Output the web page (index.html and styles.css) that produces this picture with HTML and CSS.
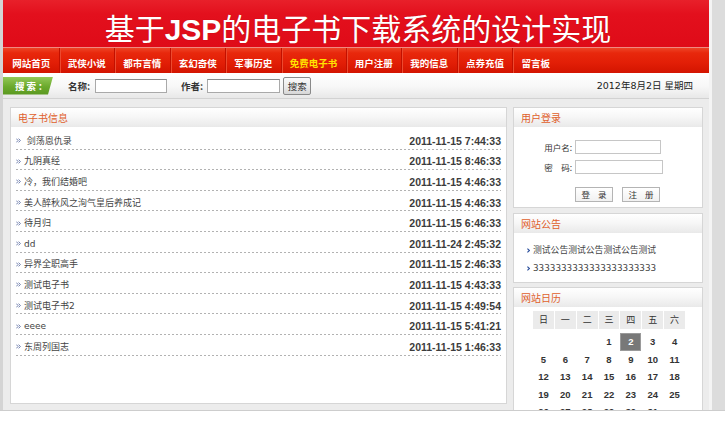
FILE: index.html
```html
<!DOCTYPE html>
<html lang="zh-CN">
<head>
<meta charset="utf-8">
<title>基于JSP的电子书下载系统的设计实现</title>
<link rel="stylesheet" href="styles.css">
</head>
<body>
<div class="screen">
  <div class="edge-left"></div>
  <div class="site">
    <header class="banner"><h1>基于<b>JSP</b>的电子书下载系统的设计实现</h1></header>
    <nav class="nav">
      <a>网站首页</a><a>武侠小说</a><a>都市言情</a><a>玄幻奇侠</a><a>军事历史</a><a class="hot">免费电子书</a><a>用户注册</a><a>我的信息</a><a>点券充值</a><a>留言板</a>
    </nav>
    <div class="searchbar">
      <span class="search-tag">搜索：</span>
      <label class="field-label">名称:</label><input class="field w-name" type="text">
      <label class="field-label second">作者:</label><input class="field w-author" type="text">
      <button class="search-btn">搜索</button>
      <span class="today">2012年8月2日 星期四</span>
    </div>
    <div class="content">
      <section class="panel books">
        <div class="panel-head">电子书信息</div>
        <ul class="book-list">
          <li><span class="title"><svg class="dbl" viewBox="0 0 5 5"><path d="M0.3 0.6 L2.1 2.5 L0.3 4.4 M2.6 0.6 L4.4 2.5 L2.6 4.4"/></svg> 剑荡恩仇录</span><span class="date">2011-11-15 7:44:33</span></li>
          <li><span class="title"><svg class="dbl" viewBox="0 0 5 5"><path d="M0.3 0.6 L2.1 2.5 L0.3 4.4 M2.6 0.6 L4.4 2.5 L2.6 4.4"/></svg>九阴真经</span><span class="date">2011-11-15 8:46:33</span></li>
          <li><span class="title"><svg class="dbl" viewBox="0 0 5 5"><path d="M0.3 0.6 L2.1 2.5 L0.3 4.4 M2.6 0.6 L4.4 2.5 L2.6 4.4"/></svg>冷，我们结婚吧</span><span class="date">2011-11-15 4:46:33</span></li>
          <li><span class="title"><svg class="dbl" viewBox="0 0 5 5"><path d="M0.3 0.6 L2.1 2.5 L0.3 4.4 M2.6 0.6 L4.4 2.5 L2.6 4.4"/></svg>美人醉秋风之洵气皇后养成记</span><span class="date">2011-11-15 4:46:33</span></li>
          <li><span class="title"><svg class="dbl" viewBox="0 0 5 5"><path d="M0.3 0.6 L2.1 2.5 L0.3 4.4 M2.6 0.6 L4.4 2.5 L2.6 4.4"/></svg>待月归</span><span class="date">2011-11-15 6:46:33</span></li>
          <li><span class="title"><svg class="dbl" viewBox="0 0 5 5"><path d="M0.3 0.6 L2.1 2.5 L0.3 4.4 M2.6 0.6 L4.4 2.5 L2.6 4.4"/></svg>dd</span><span class="date">2011-11-24 2:45:32</span></li>
          <li><span class="title"><svg class="dbl" viewBox="0 0 5 5"><path d="M0.3 0.6 L2.1 2.5 L0.3 4.4 M2.6 0.6 L4.4 2.5 L2.6 4.4"/></svg>异界全职高手</span><span class="date">2011-11-15 2:46:33</span></li>
          <li><span class="title"><svg class="dbl" viewBox="0 0 5 5"><path d="M0.3 0.6 L2.1 2.5 L0.3 4.4 M2.6 0.6 L4.4 2.5 L2.6 4.4"/></svg>测试电子书</span><span class="date">2011-11-15 4:43:33</span></li>
          <li><span class="title"><svg class="dbl" viewBox="0 0 5 5"><path d="M0.3 0.6 L2.1 2.5 L0.3 4.4 M2.6 0.6 L4.4 2.5 L2.6 4.4"/></svg>测试电子书2</span><span class="date">2011-11-15 4:49:54</span></li>
          <li><span class="title"><svg class="dbl" viewBox="0 0 5 5"><path d="M0.3 0.6 L2.1 2.5 L0.3 4.4 M2.6 0.6 L4.4 2.5 L2.6 4.4"/></svg>eeee</span><span class="date">2011-11-15 5:41:21</span></li>
          <li><span class="title"><svg class="dbl" viewBox="0 0 5 5"><path d="M0.3 0.6 L2.1 2.5 L0.3 4.4 M2.6 0.6 L4.4 2.5 L2.6 4.4"/></svg>东周列国志</span><span class="date">2011-11-15 1:46:33</span></li>
        </ul>
      </section>
      <aside class="side">
        <section class="panel login">
          <div class="panel-head">用户登录</div>
          <div class="login-form">
            <label class="lf-label">用户名:</label><input class="lf-input w86" type="text">
            <label class="lf-label">密　码:</label><input class="lf-input w88" type="password">
            <div class="lf-buttons"><button class="lf-btn">登 录</button><button class="lf-btn">注 册</button></div>
          </div>
        </section>
        <section class="panel notice">
          <div class="panel-head">网站公告</div>
          <ul class="notice-list">
            <li><svg class="chev" viewBox="0 0 3 5"><path d="M0.4 0.6 L2.4 2.5 L0.4 4.4"/></svg>测试公告测试公告测试公告测试</li>
            <li><svg class="chev" viewBox="0 0 3 5"><path d="M0.4 0.6 L2.4 2.5 L0.4 4.4"/></svg>3333333333333333333333</li>
          </ul>
        </section>
        <section class="panel calendar">
          <div class="panel-head">网站日历</div>
          <div class="cal-head"><span>日</span><span>一</span><span>二</span><span>三</span><span>四</span><span>五</span><span>六</span></div>
          <div class="cal-days">
            <span></span><span></span><span></span><span>1</span><span class="cur">2</span><span>3</span><span>4</span>
            <span>5</span><span>6</span><span>7</span><span>8</span><span>9</span><span>10</span><span>11</span>
            <span>12</span><span>13</span><span>14</span><span>15</span><span>16</span><span>17</span><span>18</span>
            <span>19</span><span>20</span><span>21</span><span>22</span><span>23</span><span>24</span><span>25</span>
            <span>26</span><span>27</span><span>28</span><span>29</span><span>30</span><span>31</span><span></span>
          </div>
        </section>
      </aside>
    </div>
  </div>
  <div class="edge-gap"></div>
  <div class="scrollbar"></div>
</div>
<div class="foot"></div>
</body>
</html>
```
FILE: styles.css
```css
html, body { margin: 0; padding: 0; }
body {
  background: #fff;
  font-family: "DejaVu Sans", "Noto Sans CJK SC", sans-serif;
  color: #333;
  width: 725px;
  height: 422px;
  overflow: hidden;
}
.screen { display: flex; height: 410px; background: #dcdcdc; }
.edge-left { width: 3px; background: #d4d4d4; flex: none; }
.site {
  width: 706px; flex: none;
  display: flex; flex-direction: column;
  overflow: hidden;
  background: #ececec;
}
.edge-gap { width: 3px; flex: none; background: #f4f4f4; }
.scrollbar { flex: 1; background: #dcdcdc; }
.foot { height: 11px; border-top: 1px solid #cdcdcd; background: #fff; }

/* banner */
.banner {
  height: 47px; flex: none;
  background: linear-gradient(180deg, #e8202a 0%, #e3101d 30%, #df0b18 100%);
  text-align: center;
}
.banner h1 {
  margin: 0;
  padding: 8px 0 0 4px;
  font: 400 30px/38px "Noto Sans CJK SC", sans-serif;
  color: #fff;
  text-shadow: 0 0 1px rgba(110, 0, 0, .45);
}
.banner h1 b { font-family: "Liberation Sans", sans-serif; font-weight: 700; }

/* nav */
.nav {
  height: 26px; flex: none; box-sizing: border-box;
  display: flex; padding-left: 1px;
  border-top: 1px solid #f08a80;
  background: linear-gradient(180deg, #ee4426 0%, #e8280c 20%, #e21e06 60%, #d31400 100%);
}
.nav a {
  padding: 5px 8.25px 0;
  font: 700 9.5px/20px "Noto Sans CJK SC", sans-serif;
  color: #fff;
  border-right: 1px solid #c21000;
  box-shadow: 1px 0 0 #ec4a30;
}
.nav a:last-child { border-right: none; box-shadow: none; }
.nav a.hot { color: #ffe400; }

/* search bar */
.searchbar {
  height: 26px; flex: none; box-sizing: border-box;
  display: flex; align-items: center;
  background: linear-gradient(180deg, #ffffff 0%, #f7f7f7 55%, #e8e8e8 100%);
  border-bottom: 1px solid #d2d2d2;
}
.search-tag {
  width: 50px; height: 18px; box-sizing: border-box;
  padding-left: 12px;
  background: linear-gradient(180deg, #93c856 0%, #6aa92c 55%, #5a9820 100%);
  clip-path: polygon(0 0, 100% 0, calc(100% - 5px) 100%, 0 100%);
  font: 700 9.5px/18px "Noto Sans CJK SC", sans-serif;
  letter-spacing: 2px;
  color: #fff;
}
.field-label {
  margin-left: 15px;
  font: 700 9.5px/14px "Noto Sans CJK SC", sans-serif;
  color: #333;
}
.field-label.second { margin-left: 14px; }
.field {
  margin: 0 0 0 5px; padding: 0;
  height: 14px; box-sizing: border-box;
  border: 1px solid #a9a9a9;
  border-top-color: #8a8a8a;
  background: #fff;
}
.w-name { width: 72px; }
.w-author { width: 73px; margin-left: 4px; }
.search-btn {
  margin-left: 3px; padding: 0;
  width: 28px; height: 18px;
  border: 1px solid #8a8a8a; border-radius: 2px;
  background: linear-gradient(180deg, #fafafa 0%, #e9e9e9 60%, #d6d6d6 100%);
  font: 400 9.5px/16px "Noto Sans CJK SC", sans-serif;
  color: #333;
}
.today {
  margin-left: auto; margin-right: 16px;
  font: 400 9.5px/14px "DejaVu Sans", "Noto Sans CJK SC", sans-serif;
  color: #222;
}

/* content */
.content {
  flex: 1;
  display: flex; align-items: flex-start; gap: 6px;
  padding: 8px 6px 0 7px;
}
.panel {
  background: #fff;
  border: 1px solid #d6d6d6;
  box-sizing: border-box;
  flex: none;
}
.panel-head {
  height: 19px;
  padding-left: 7px;
  background: linear-gradient(180deg, #ffffff 0%, #f7f7f7 45%, #e9e9e9 100%);
  font: 400 10px/19px "Noto Sans CJK SC", sans-serif;
  color: #e0602c;
}
.books { width: 497px; height: 297px; }
.book-list { list-style: none; margin: 0; padding: 2px 5px 0; }
.book-list li {
  display: flex; justify-content: space-between; align-items: center;
  height: 17.6px; padding-top: 3px;
  background: repeating-linear-gradient(90deg, #b2b2b2 0 2px, transparent 2px 4px) left bottom / 100% 1px no-repeat;
}
.title {
  display: flex; align-items: center; gap: 3px;
  font: 400 9px/12px "DejaVu Sans", "Noto Sans CJK SC", sans-serif;
  color: #444;
  white-space: pre;
}
.dbl { width: 5px; height: 5px; flex: none; }
.dbl path { fill: none; stroke: #6374a6; stroke-width: 0.9; }
.date {
  font: 700 10.5px/12px "Liberation Sans", sans-serif;
  color: #3c3c3c;
}

/* side */
.side { width: 190px; flex: none; display: flex; flex-direction: column; }
.login { height: 101px; }
.notice { height: 70px; margin-top: 5px; }
.calendar { height: 140px; margin-top: 4px; }

.login-form {
  display: grid;
  grid-template-columns: 58px auto;
  column-gap: 3px; row-gap: 6px;
  padding-top: 13px;
}
.lf-label {
  text-align: right;
  font: 400 8.5px/14px "Noto Sans CJK SC", sans-serif;
  color: #333;
}
.lf-input {
  margin: 0; padding: 0;
  height: 14px; box-sizing: border-box;
  border: 1px solid #c6c6c6;
  background: #fff;
}
.w86 { width: 86px; }
.w88 { width: 88px; }
.lf-buttons {
  grid-column: 2;
  display: flex; gap: 9px;
  margin-top: 7px;
}
.lf-btn {
  margin: 0; padding: 0 0 0 3px;
  width: 38px; height: 15px;
  border: 1px solid #b4b4b4;
  background: linear-gradient(180deg, #ffffff, #f1f1f1);
  font: 400 8.5px/13px "Noto Sans CJK SC", sans-serif;
  letter-spacing: 3px;
  color: #333;
}

.notice-list { list-style: none; margin: 0; padding: 8px 0 0 13px; }
.notice-list li {
  display: flex; align-items: center; gap: 3px;
  font: 400 8.8px/18px "DejaVu Sans", "Noto Sans CJK SC", sans-serif;
  color: #444;
}
.chev { width: 3px; height: 5px; flex: none; }
.chev path { fill: none; stroke: #2a4e9c; stroke-width: 1.1; }

.cal-head, .cal-days {
  display: grid;
  grid-template-columns: repeat(7, 1fr);
  column-gap: 1px;
  width: 152px;
  margin-left: 19px;
}
.cal-head { margin-top: 4px; }
.cal-head span {
  height: 18px;
  background: #ebebeb;
  text-align: center;
  font: 400 9px/18px "Noto Sans CJK SC", sans-serif;
  color: #333;
}
.cal-days { margin-top: 4px; grid-auto-rows: 17.5px; }
.cal-days span {
  text-align: center;
  font: 700 9.5px/17.5px "Liberation Sans", sans-serif;
  color: #333;
}
.cal-days span.cur {
  background: #787878;
  color: #fff;
  box-shadow: inset 0 0 0 1px #9a9a9a;
}
```
